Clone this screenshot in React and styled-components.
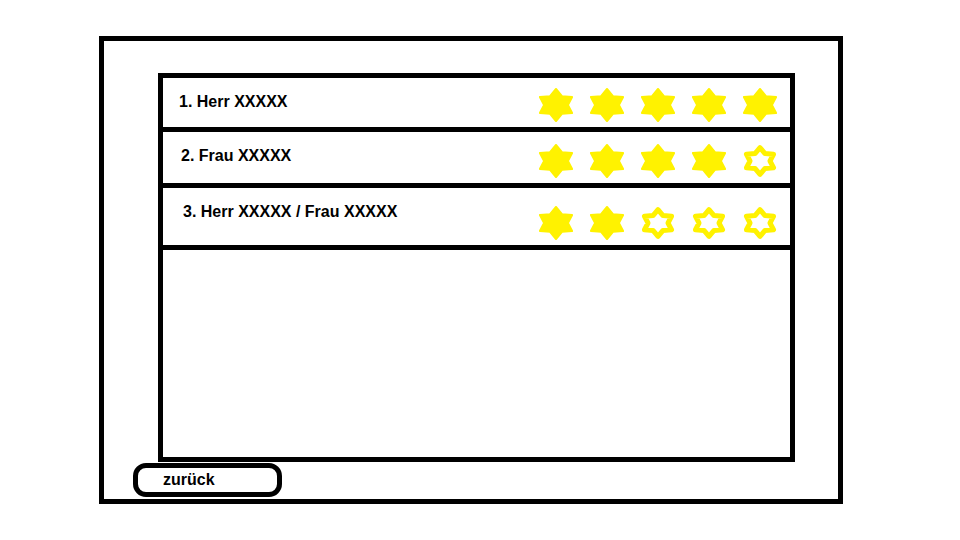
import React from "react";
import styled, { createGlobalStyle } from "styled-components";

const GlobalStyle = createGlobalStyle`
  * { box-sizing: border-box; }
  body {
    margin: 0;
    background: #fff;
    font-family: "Liberation Sans", Arial, sans-serif;
  }
`;

const YELLOW = "#FFF200";

// STYLES - page
const Screen = styled.div`
  width: 960px;
  height: 540px;
  padding: 36px 0 0 99px;
  background: #fff;
`;
const Frame = styled.div`
  width: 744px;
  height: 468px;
  border: 5px solid #000;
  display: flex;
  flex-direction: column;
  padding: 32px 43px 0 29px;
`;
const Panel = styled.div`
  margin-left: 25px;
  height: 389px;
  border: 5px solid #000;
  display: flex;
  flex-direction: column;
`;
const Row = styled.div`
  height: ${(p) => p.$height + 5}px;
  border-bottom: 5px solid #000;
  display: flex;
  justify-content: space-between;
`;
const Name = styled.div`
  padding: 14px 0 0 ${(p) => p.$indent}px;
  font-size: 16px;
  line-height: 20px;
  font-weight: bold;
  color: #000;
`;
const Stars = styled.div`
  align-self: flex-end;
  display: flex;
  gap: 17px;
  padding: 0 13px 5px 0;
`;
const BackButton = styled.button`
  margin-top: 1px;
  width: 149px;
  height: 34px;
  border: 5px solid #000;
  border-radius: 13px;
  background: #fff;
  padding: 0 0 0 25px;
  display: flex;
  align-items: center;
  font-family: "Liberation Sans", Arial, sans-serif;
  font-size: 16px;
  font-weight: bold;
  color: #000;
`;

// six pointed star like the paint tool
const starPoints = (scale) => {
  const pts = [];
  for (let k = 0; k < 12; k++) {
    const a = ((-90 + k * 30) * Math.PI) / 180;
    const r = k % 2 === 0 ? 1 : 0.64;
    const x = 17 + 18.6 * scale * r * Math.cos(a);
    const y = 17 + 16 * scale * r * Math.sin(a);
    pts.push(`${x.toFixed(2)},${y.toFixed(2)}`);
  }
  return pts.join(" ");
};

const Star = ({ filled }) => (
  <svg width="34" height="34" viewBox="0 0 34 34">
    {filled ? (
      <polygon points={starPoints(1)} fill={YELLOW} stroke={YELLOW} strokeWidth="2" strokeLinejoin="round" />
    ) : (
      <polygon points={starPoints(0.84)} fill="#fff" stroke={YELLOW} strokeWidth="5" strokeLinejoin="round" />
    )}
  </svg>
);

const people = [
  { name: "1. Herr XXXXX", stars: 5, height: 49, indent: 16 },
  { name: "2. Frau XXXXX", stars: 4, height: 51, indent: 18 },
  { name: "3. Herr XXXXX / Frau XXXXX", stars: 2, height: 57, indent: 20 },
];

const App = () => {
  return (
    <>
      <GlobalStyle />
      <Screen>
        <Frame>
          <Panel>
            {people.map((p) => (
              <Row key={p.name} $height={p.height}>
                <Name $indent={p.indent}>{p.name}</Name>
                <Stars>
                  {[0, 1, 2, 3, 4].map((i) => (
                    <Star key={i} filled={i < p.stars} />
                  ))}
                </Stars>
              </Row>
            ))}
          </Panel>
          <BackButton type="button">zurück</BackButton>
        </Frame>
      </Screen>
    </>
  );
};
export default App;
